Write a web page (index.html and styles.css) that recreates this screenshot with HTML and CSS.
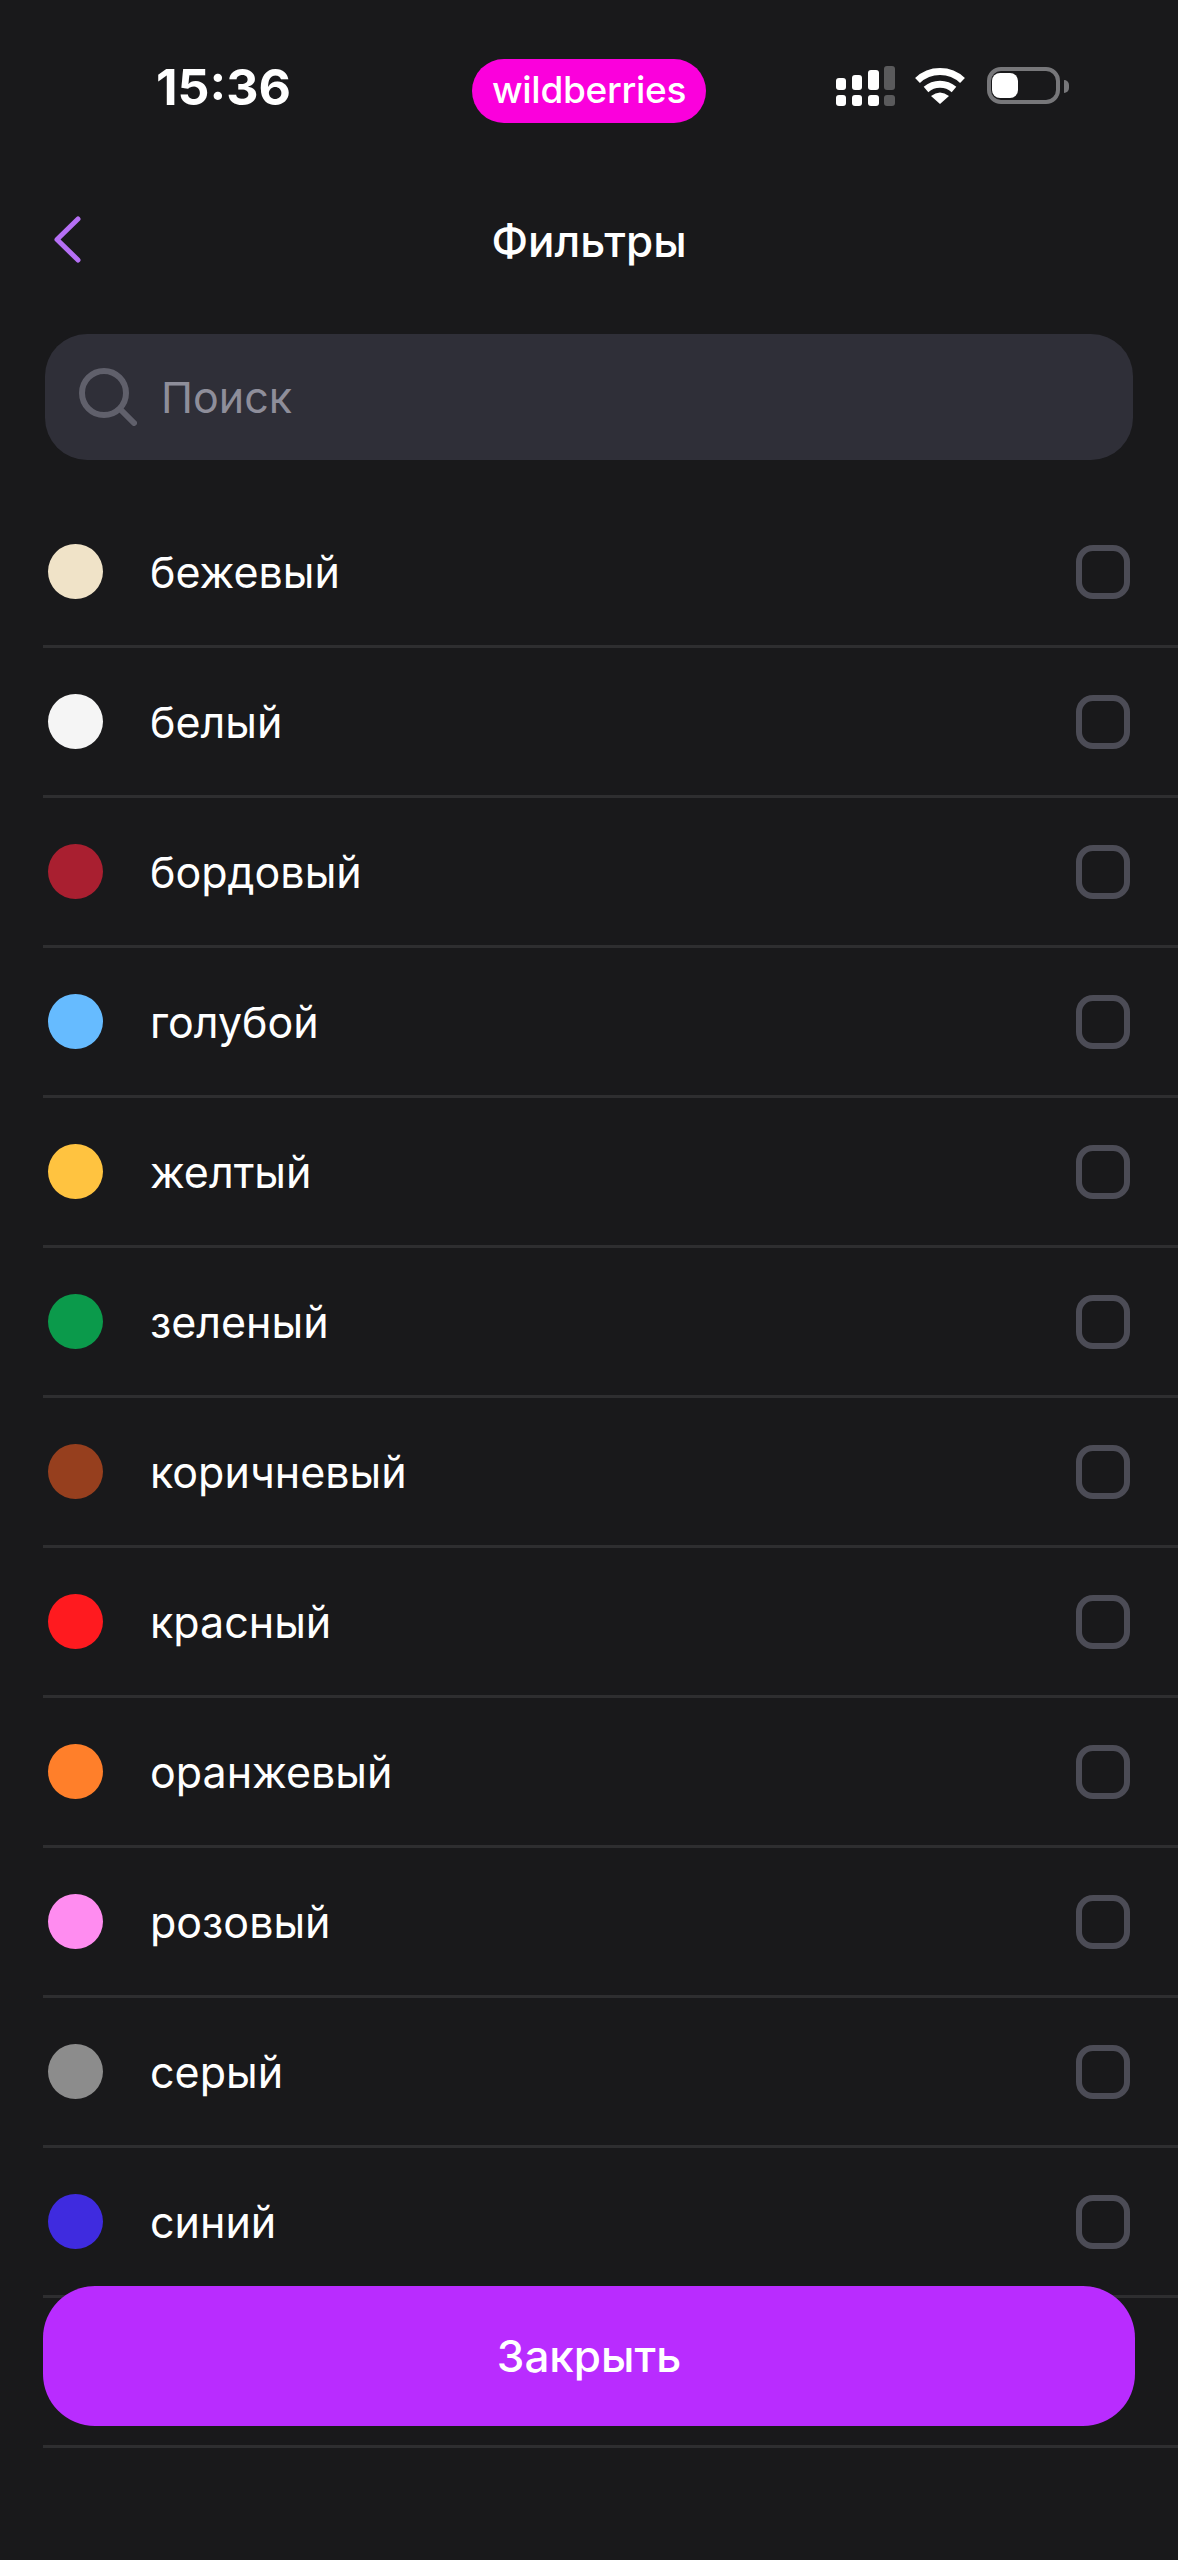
FILE: index.html
```html
<!DOCTYPE html>
<html lang="ru">

<head>
    <meta charset="UTF-8">
    <meta name="viewport" content="width=device-width, initial-scale=1.0">
    <title>Фильтры</title>
    <link rel="stylesheet" href="styles.css">
</head>

<body>

    <div class="screen">
        <div class="status-bar">
            <div class="status-time">15:36</div>
            <div class="status-logo">wildberries</div>
            <div class="status-icons">
                <svg class="icon-signal" width="59" height="40" viewBox="0 0 59 40">
                    <rect x="0" y="12" width="10" height="12" rx="3" fill="#fff"/>
                    <rect x="16" y="9" width="10" height="15" rx="3" fill="#fff"/>
                    <rect x="32" y="4" width="11" height="20" rx="3" fill="#fff"/>
                    <rect x="48" y="0" width="11" height="24" rx="3" fill="#5a5a5c"/>
                    <rect x="0" y="29" width="10" height="11" rx="3" fill="#fff"/>
                    <rect x="16" y="29" width="10" height="11" rx="3" fill="#fff"/>
                    <rect x="32" y="29" width="11" height="11" rx="3" fill="#fff"/>
                    <rect x="48" y="29" width="11" height="11" rx="3" fill="#5a5a5c"/>
                </svg>
                <svg class="icon-wifi" width="52" height="37" viewBox="0 0 52 37">
                    <path d="M3.5 13.5C16 1.5 36 1.5 48.5 13.5" fill="none" stroke="#fff" stroke-width="7"/>
                    <path d="M12 22.5C20 15.5 32 15.5 40 22.5" fill="none" stroke="#fff" stroke-width="7"/>
                    <path d="M17 29Q26 22 35 29L26 37Z" fill="#fff"/>
                </svg>
                <div class="battery">
                    <div class="battery-level"></div>
                </div>
                <div class="battery-nub"></div>
            </div>
        </div>

        <div class="nav-bar">
            <svg class="icon-back" width="28" height="47" viewBox="0 0 28 47">
                <path d="M25 3L4 23.5L25 44" fill="none" stroke="#b56ff5" stroke-width="5" stroke-linecap="round" stroke-linejoin="round"/>
            </svg>
            <h1>Фильтры</h1>
        </div>

        <div class="search-box">
            <svg width="58" height="58" viewBox="0 0 58 58">
                <circle cx="25" cy="25" r="22" fill="none" stroke="#60606b" stroke-width="6"/>
                <path d="M41 41L55 55" fill="none" stroke="#60606b" stroke-width="6" stroke-linecap="round"/>
            </svg>
            <span>Поиск</span>
        </div>

        <ul class="color-list">
            <li><span class="dot beige"></span><span class="color-name">бежевый</span><span class="checkbox"></span></li>
            <li><span class="dot white"></span><span class="color-name">белый</span><span class="checkbox"></span></li>
            <li><span class="dot burgundy"></span><span class="color-name">бордовый</span><span class="checkbox"></span></li>
            <li><span class="dot sky"></span><span class="color-name">голубой</span><span class="checkbox"></span></li>
            <li><span class="dot yellow"></span><span class="color-name">желтый</span><span class="checkbox"></span></li>
            <li><span class="dot green"></span><span class="color-name">зеленый</span><span class="checkbox"></span></li>
            <li><span class="dot brown"></span><span class="color-name">коричневый</span><span class="checkbox"></span></li>
            <li><span class="dot red"></span><span class="color-name">красный</span><span class="checkbox"></span></li>
            <li><span class="dot orange"></span><span class="color-name">оранжевый</span><span class="checkbox"></span></li>
            <li><span class="dot pink"></span><span class="color-name">розовый</span><span class="checkbox"></span></li>
            <li><span class="dot gray"></span><span class="color-name">серый</span><span class="checkbox"></span></li>
            <li><span class="dot blue"></span><span class="color-name">синий</span><span class="checkbox"></span></li>
            <li></li>
        </ul>

        <button class="btn-close">Закрыть</button>
    </div>

</body>

</html>
```

FILE: styles.css
```css
* {
    box-sizing: border-box;
}

body {
    margin: 0;
    background-color: #19191b;
    font-family: Inter, "Noto Sans", sans-serif;
    color: #fff;
}

.screen {
    position: relative;
    height: 2560px;
    overflow: hidden;
}

.status-bar {
    display: grid;
    grid-template-columns: 1fr 234px 1fr;
    padding-top: 59px;
}

.status-time {
    padding-left: 156px;
    font-size: 50px;
    line-height: 56px;
    font-weight: 700;
}

.status-logo {
    height: 64px;
    border-radius: 32px;
    background-color: #fb00dc;
    font-size: 37px;
    font-weight: 500;
    line-height: 62px;
    letter-spacing: -0.3px;
    text-align: center;
}

.status-icons {
    display: flex;
    align-items: flex-start;
    justify-content: flex-end;
    padding: 7px 109px 0 0;
}

.icon-wifi {
    margin: 1px 21px 0 19px;
}

.battery {
    width: 73px;
    height: 37px;
    margin-top: 1px;
    padding: 2px 0 0 1px;
    border: 4px solid #77777a;
    border-radius: 14px;
}

.battery-level {
    width: 26px;
    height: 25px;
    border-radius: 8px;
    background-color: #fff;
}

.battery-nub {
    width: 5px;
    height: 13px;
    margin: 14px 0 0 4px;
    border-radius: 0 5px 5px 0;
    background-color: #77777a;
}

.nav-bar {
    position: relative;
    height: 118px;
    margin-top: 93px;
}

.icon-back {
    position: absolute;
    left: 53px;
    top: 0;
}

h1 {
    margin: 0;
    font-size: 44px;
    line-height: 50px;
    font-weight: 500;
    text-align: center;
}

.search-box {
    display: flex;
    align-items: center;
    gap: 24px;
    height: 126px;
    margin: 0 45px;
    padding-left: 34px;
    border-radius: 42px;
    background-color: #2f2f38;
    color: #8e8e9a;
    font-size: 43px;
}

.color-list {
    list-style-type: none;
    margin: 38px 0 0 43px;
    padding: 0;
}

.color-list li {
    display: flex;
    align-items: center;
    height: 150px;
    padding: 0 48px 0 5px;
    border-bottom: 3px solid #2e2e30;
}

.dot {
    width: 55px;
    height: 55px;
    border-radius: 50%;
}

.color-name {
    flex: 1;
    margin-left: 47px;
    font-size: 43px;
}

.checkbox {
    width: 54px;
    height: 54px;
    border: 6px solid #4c4c56;
    border-radius: 17px;
}

.beige { background-color: #f0e3c8; }
.white { background-color: #f5f5f5; }
.burgundy { background-color: #a91f30; }
.sky { background-color: #66bbff; }
.yellow { background-color: #ffc340; }
.green { background-color: #0b9a4b; }
.brown { background-color: #963f1e; }
.red { background-color: #ff1a1f; }
.orange { background-color: #ff7f2a; }
.pink { background-color: #ff8cf0; }
.gray { background-color: #8c8c8c; }
.blue { background-color: #3f2bdf; }

.btn-close {
    position: absolute;
    left: 43px;
    right: 43px;
    bottom: 134px;
    height: 140px;
    border: none;
    border-radius: 52px;
    background-color: #b92cff;
    color: #fff;
    font-family: Inter, "Noto Sans", sans-serif;
    font-size: 44px;
    font-weight: 500;
}
```
